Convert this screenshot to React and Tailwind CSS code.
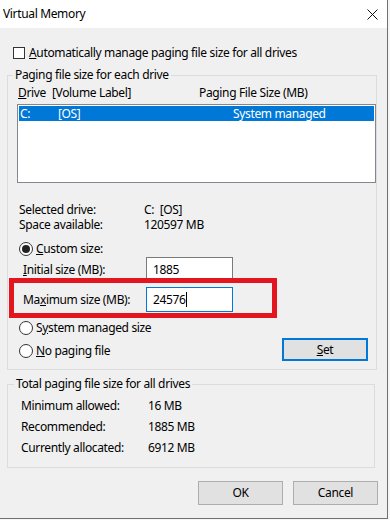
import React from 'react';

const Radio = ({ checked }) => (
  <span className="w-[14px] h-[14px] rounded-full border border-[#333] bg-white flex items-center justify-center shrink-0">
    {checked && <span className="w-[8px] h-[8px] rounded-full bg-[#222]" />}
  </span>
);

const App = () => {
  return (
    <div className="w-[390px] h-[520px] bg-[#f6f6f6] text-[12px] tracking-[-0.35px] text-black font-['Noto_Sans',sans-serif] leading-[16px]">
      <div className="w-[388px] h-[519px] flex flex-col bg-[#f0f0f0] border-r border-b border-[#707070]">
        {/* title bar */}
        <div className="h-[28px] bg-white flex items-center justify-between pl-[3px] pr-[9px] shrink-0">
          <span>Virtual Memory</span>
          <svg width="11" height="11" viewBox="0 0 11 11">
            <path d="M0.5 0.5 L10.5 10.5 M10.5 0.5 L0.5 10.5" stroke="#111" strokeWidth="1" />
          </svg>
        </div>

        <div className="mt-[17px] h-[16px] flex items-center pl-[13px]">
          <span className="w-[12px] h-[12px] border border-[#333] bg-white" />
          <span className="ml-[4px]"><u>A</u>utomatically manage paging file size for all drives</span>
        </div>

        <fieldset className="mt-[6px] ml-[7px] w-[368px] border border-[#dcdcdc] pb-[8px]">
          <legend className="ml-[5px] px-[2px]">Paging file size for each drive</legend>

          <div className="mt-[2px] h-[16px] flex pl-[10px]">
            <span className="w-[34px]"><u>D</u>rive</span>
            <span className="w-[147px]">[Volume Label]</span>
            <span>Paging File Size (MB)</span>
          </div>

          <div className="mt-[3px] ml-[9px] w-[359px] h-[79px] border border-[#828790] bg-white p-[1px]">
            <div className="h-[15px] bg-[#0078d7] text-white flex items-center pl-[1px]">
              <span className="w-[38px]">C:</span>
              <span className="w-[175px]">[OS]</span>
              <span>System managed</span>
            </div>
          </div>

          <div className="mt-[20px] pl-[11px] flex flex-col gap-[1px] leading-[14px]">
            <div className="flex"><span className="w-[125px]">Selected drive:</span><span>C:&nbsp; [OS]</span></div>
            <div className="flex"><span className="w-[125px]">Space available:</span><span>120597 MB</span></div>
          </div>

          <div className="mt-[9px] h-[16px] flex items-center pl-[11px]">
            <Radio checked />
            <span className="ml-[3px]"><u>C</u>ustom size:</span>
          </div>

          <div className="h-[25px] flex items-center pl-[15px]">
            <span className="w-[123px]"><u>I</u>nitial size (MB):</span>
            <div className="w-[87px] h-[25px] border border-[#7a7a7a] bg-white pl-[6px] flex items-center">1885</div>
          </div>

          <div className="relative mt-[5px] h-[25px] flex items-center pl-[15px]">
            <span className="w-[123px]">Ma<u>x</u>imum size (MB):</span>
            <div className="w-[87px] h-[25px] border border-[#0078d7] bg-white pl-[6px] flex items-center">
              24576<span className="w-px h-[15px] bg-black" />
            </div>
            <div className="absolute left-[1px] top-[-9px] w-[268px] h-[40px] border-[5px] border-[#e3151f]" />
          </div>

          <div className="mt-[8px] h-[16px] flex items-center pl-[11px]">
            <Radio />
            <span className="ml-[3px]">S<u>y</u>stem managed size</span>
          </div>

          <div className="mt-[2px] h-[23px] flex items-center justify-between pl-[11px] pr-[8px]">
            <div className="flex items-center mt-[3px]">
              <Radio />
              <span className="ml-[3px]"><u>N</u>o paging file</span>
            </div>
            <button className="w-[86px] h-[23px] border-2 border-[#0078d7] bg-[#e1e1e1] flex items-center justify-center">
              <span><u>S</u>et</span>
            </button>
          </div>
        </fieldset>

        <fieldset className="mt-[6px] ml-[7px] w-[368px] border border-[#dcdcdc] pb-[9px]">
          <legend className="ml-[6px] px-[2px]">Total paging file size for all drives</legend>
          <div className="pt-[3px] pl-[13px] leading-[21px]">
            <div className="flex"><span className="w-[127px]">Minimum allowed:</span><span>16 MB</span></div>
            <div className="flex"><span className="w-[127px]">Recommended:</span><span>1885 MB</span></div>
            <div className="flex"><span className="w-[127px]">Currently allocated:</span><span>6912 MB</span></div>
          </div>
        </fieldset>

        <div className="mt-[13px] flex justify-end gap-[10px] pr-[9px]">
          <button className="w-[85px] h-[24px] border border-[#adadad] bg-[#e1e1e1]">OK</button>
          <button className="w-[85px] h-[24px] border border-[#adadad] bg-[#e1e1e1]">Cancel</button>
        </div>
      </div>
    </div>
  );
};

export default App;
